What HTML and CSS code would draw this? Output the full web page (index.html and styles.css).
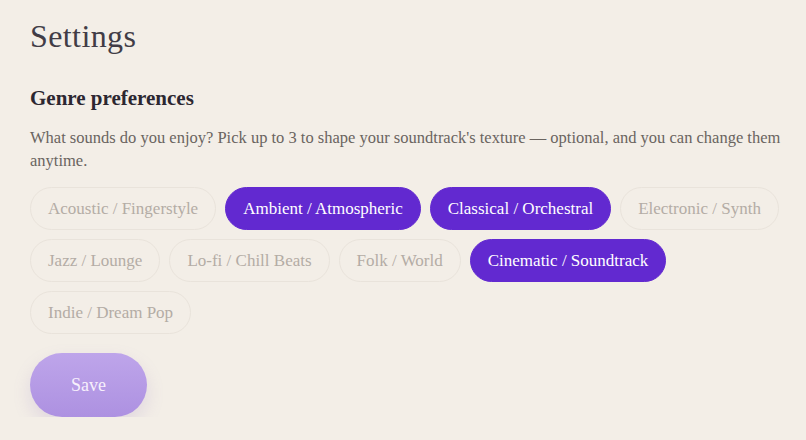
FILE: index.html
```html
<!DOCTYPE html>
<html lang="en">
  <head>
    <meta charset="UTF-8" />
    <meta name="viewport" content="width=device-width, initial-scale=1.0" />
    <title>Settings</title>
    <link rel="stylesheet" href="styles.css">
  </head>
  <body>
    <main class="settings">
      <h1 class="settings-title">Settings</h1>

      <section class="genre-section">
        <h2 class="section-title">Genre preferences</h2>
        <p class="section-help">
          What sounds do you enjoy? Pick up to 3 to shape your soundtrack's texture — optional, and you can change them anytime.
        </p>

        <div class="chip-list">
          <button class="chip">Acoustic / Fingerstyle</button>
          <button class="chip is-selected">Ambient / Atmospheric</button>
          <button class="chip is-selected">Classical / Orchestral</button>
          <button class="chip">Electronic / Synth</button>
          <button class="chip">Jazz / Lounge</button>
          <button class="chip">Lo-fi / Chill Beats</button>
          <button class="chip">Folk / World</button>
          <button class="chip is-selected">Cinematic / Soundtrack</button>
          <button class="chip">Indie / Dream Pop</button>
        </div>

        <button class="save-button">Save</button>
      </section>
    </main>
  </body>
</html>
```

FILE: styles.css
```css
/* Reset */
* {
  box-sizing: border-box;
}

body {
  margin: 0;
  background-color: #f3eee7;
  font-family: "Liberation Serif", "DejaVu Serif", serif;
  color: #2f2a33;
}

/* Layout */
.settings {
  padding: 14px 16px 0 30px;
}

.settings-title {
  margin: 0;
  font-size: 32px;
  font-weight: normal;
  line-height: 44px;
  color: #413c46;
  letter-spacing: 0.4px;
}

.section-title {
  margin: 26px 0 0;
  font-size: 21px;
  line-height: 28px;
  font-weight: bold;
  color: #2c2731;
}

.section-help {
  margin: 14px 0 0;
  font-size: 16.5px;
  line-height: 23px;
  color: #6a645f;
}

/* Chips */
.chip-list {
  display: flex;
  flex-wrap: wrap;
  gap: 9px;
  margin-top: 15px;
}

.chip {
  height: 43px;
  padding: 0 17px;
  border: 1px solid #e9e3db;
  border-radius: 22px;
  background-color: #f3eee7;
  font-family: inherit;
  font-size: 17px;
  color: #b3aca5;
}

.chip.is-selected {
  border-color: #6229d0;
  background-color: #6229d0;
  color: #ffffff;
}

/* Save */
.save-button {
  display: block;
  width: 117px;
  height: 64px;
  margin-top: 19px;
  border: none;
  border-radius: 32px;
  background: linear-gradient(#bea5ea, #ad91e1);
  box-shadow: 0 8px 18px rgba(140, 110, 190, 0.18);
  font-family: inherit;
  font-size: 18px;
  color: #f7f0fc;
}
```
